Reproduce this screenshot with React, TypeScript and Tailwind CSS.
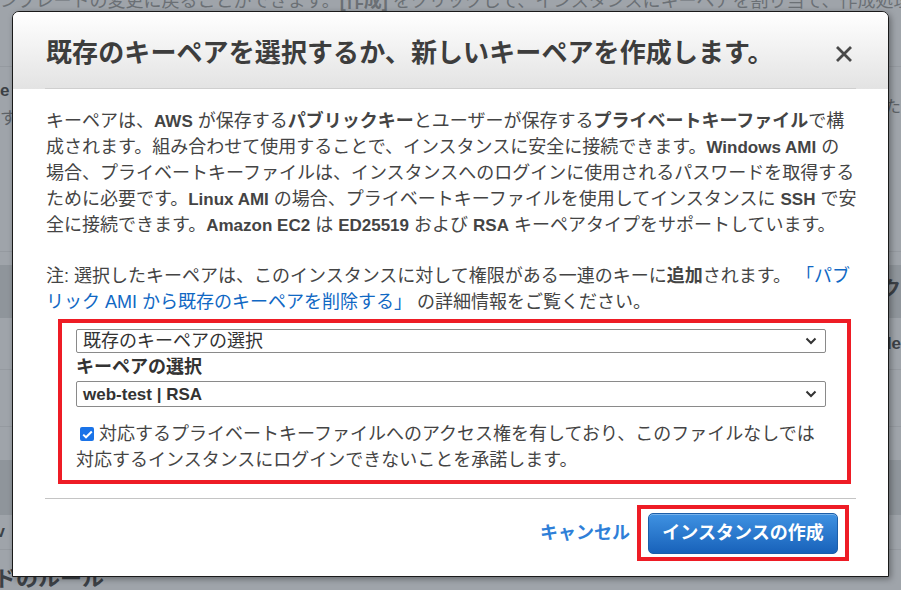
import React from "react";

const FONT = { fontFamily: '"Liberation Sans", "Noto Sans CJK JP", sans-serif' };

function Chevron() {
  return (
    <svg width="12" height="8" viewBox="0 0 12 8" className="shrink-0">
      <path d="M1.5 1.5 L6 6 L10.5 1.5" fill="none" stroke="#333" strokeWidth="2" />
    </svg>
  );
}

function Select({ children, h }: { children: React.ReactNode; h: string }) {
  return (
    <div className={`flex items-center justify-between w-[750px] ${h} border border-[#8a8a8a] rounded-[2px] bg-white pl-[6px] pr-[8px] text-[#333]`}>
      <div className="leading-none">{children}</div>
      <Chevron />
    </div>
  );
}

// bold latin words run a touch smaller than the japanese text
function L({ children }: { children: React.ReactNode }) {
  return <b className="text-[17px] leading-none">{children}</b>;
}

export default function App() {
  return (
    <div className="relative w-[901px] h-[590px] overflow-hidden bg-[#9fa4aa] text-[#3c4146]" style={FONT}>
      {/* page behind the overlay */}
      <div className="flex flex-col">
        <div className="h-[67px] border-b border-[#959aa0] overflow-hidden">
          <div className="-mt-[10px] whitespace-nowrap text-[18px] leading-[22px] text-[#6b7075]">
            ンプレートの変更に戻ることができます。<b>[作成]</b> をクリックして、インスタンスにキーペアを割り当て、作成処理を
          </div>
        </div>
        <div className="h-[185px] border-b border-[#959aa0] flex justify-between">
          <div className="flex flex-col text-[17px] leading-[28px] pt-[10px]">
            <span className="font-bold">e</span>
            <span className="text-[#5d6267]">す</span>
          </div>
          <span className="pt-[28px] text-[16px] text-[#5d6267]">た</span>
        </div>
        <div className="h-[13px]" />
        <div className="h-[53px] bg-[#8f959b] flex justify-end">
          <span className="pt-[14px] text-[20px] font-bold leading-none">ク</span>
        </div>
        <div className="h-[52px] border-b border-[#959aa0] flex justify-end items-center">
          <span className="text-[17px] font-bold">de</span>
        </div>
        <div className="h-[57px] border-b border-[#959aa0]" />
        <div className="h-[33px]" />
        <div className="h-[55px] bg-[#8f959b]" />
        <div className="h-[35px] border-b border-[#959aa0] flex items-center">
          <span className="text-[16px] font-bold -ml-[4px]">v</span>
        </div>
        <div className="pt-[18px] text-[22px] font-bold leading-none whitespace-nowrap -ml-[6px]">ドのルール</div>
      </div>

      {/* modal */}
      <div className="absolute left-[12px] top-[11px] w-[877px] h-[566px] bg-white border border-[#1a1a1a] rounded-t-[7px] shadow-[2px_2px_6px_rgba(0,0,0,0.35)] flex flex-col">
        <div className="h-[77px] shrink-0 rounded-t-[6px] bg-gradient-to-b from-white to-[#e3e3e3]">
          <div className="mx-[32px] h-full border-b border-[#cfcfcf] flex items-center justify-between pt-[6px]">
            <h1 className="pl-[1px] text-[26px] font-bold text-[#3d3d3d] leading-none tracking-[0.1px]">
              既存のキーペアを選択するか、新しいキーペアを作成します。
            </h1>
            <svg width="18" height="18" viewBox="0 0 18 18" className="mr-[3px] mt-[2px]">
              <path d="M2 2 L16 16 M16 2 L2 16" stroke="#4a4a4a" strokeWidth="2.8" />
            </svg>
          </div>
        </div>

        <div className="mx-[32px] pt-[19px] text-[18px] leading-[26px] text-[#444] whitespace-nowrap">
          <p className="pl-[1px]">
            キーペアは、<L>AWS</L> が保存する<b>パブリックキー</b>とユーザーが保存する<b>プライベートキーファイル</b>で構<br />
            成されます。組み合わせて使用することで、インスタンスに安全に接続できます。<L>Windows AMI</L> の<br />
            場合、プライベートキーファイルは、インスタンスへのログインに使用されるパスワードを取得する<br />
            ために必要です。<L>Linux AMI</L> の場合、プライベートキーファイルを使用してインスタンスに <L>SSH</L> で安<br />
            全に接続できます。<L>Amazon EC2</L> は <L>ED25519</L> および <L>RSA</L> キーペアタイプをサポートしています。
          </p>
          <p className="pl-[1px] mt-[25px]">
            注: 選択したキーペアは、このインスタンスに対して権限がある一連のキーに<b>追加</b>されます。{" "}
            <span className="text-[#1068c4]">「パブ</span>
            <br />
            <span className="text-[#1068c4]">リック AMI から既存のキーペアを削除する」</span> の詳細情報をご覧ください。
          </p>

          <div className="mt-[4px] ml-[13px] mr-[5px] h-[165px] border-[4px] border-[#ee1c25] pt-[6px] pl-[14px]">
            <Select h="h-[24px]">既存のキーペアの選択</Select>
            <div className="pt-[4px] pb-[3px] font-bold text-[#333] leading-[21px]">キーペアの選択</div>
            <Select h="h-[26px]">
              <span className="font-bold text-[17px]">web-test | RSA</span>
            </Select>
            <div className="mt-[14px] text-[#444]">
              <div className="flex items-center">
                <div className="ml-[4px] mr-[5px] w-[14px] h-[14px] rounded-[2px] bg-[#1a73e8] flex items-center justify-center">
                  <svg width="11" height="9" viewBox="0 0 11 9">
                    <path d="M1.2 4.6 L4 7.3 L9.8 1.5" fill="none" stroke="white" strokeWidth="2" />
                  </svg>
                </div>
                <span>対応するプライベートキーファイルへのアクセス権を有しており、このファイルなしでは</span>
              </div>
              <div>対応するインスタンスにログインできないことを承諾します。</div>
            </div>
          </div>

          <div className="mt-[14px] border-t border-[#c4c4c4]" />
        </div>

        <div className="mx-[32px] flex justify-end items-center pt-[6px]">
          <span className="text-[18px] font-bold text-[#2f7fd8] mr-[7px]">キャンセル</span>
          <div className="border-[4px] border-[#ee1c25] w-[212px] h-[56px] flex items-center justify-center">
            <button className="w-[190px] h-[41px] rounded-[5px] border border-[#1c5ea8] bg-gradient-to-b from-[#3f92e2] to-[#1862ba] text-white text-[18px] font-bold shadow-[inset_0_1px_0_rgba(255,255,255,0.3)]">
              インスタンスの作成
            </button>
          </div>
          <div className="w-[7px]" />
        </div>
      </div>
    </div>
  );
}
